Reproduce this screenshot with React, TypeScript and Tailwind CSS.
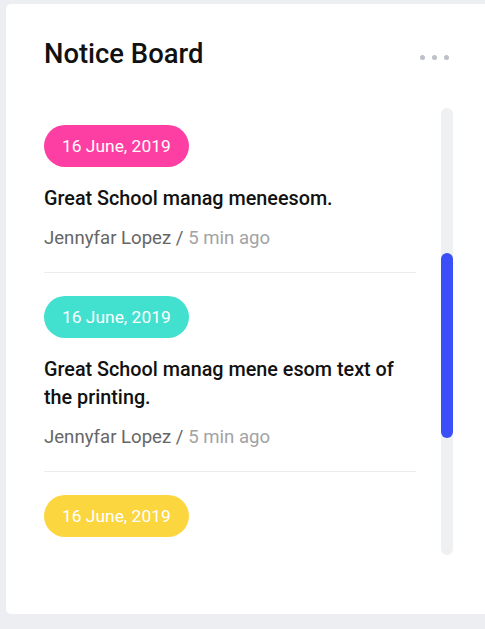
import React from "react";

interface Notice {
  date: string;
  color: string;
  title: string;
  author: string;
  time: string;
}

const notices: Notice[] = [
  {
    date: "16 June, 2019",
    color: "bg-[#fd3ea3]",
    title: "Great School manag meneesom.",
    author: "Jennyfar Lopez",
    time: "5 min ago",
  },
  {
    date: "16 June, 2019",
    color: "bg-[#42e0cf]",
    title: "Great School manag mene esom text of the printing.",
    author: "Jennyfar Lopez",
    time: "5 min ago",
  },
  {
    date: "16 June, 2019",
    color: "bg-[#fcd63f]",
    title: "Great School manag meneesom.",
    author: "Jennyfar Lopez",
    time: "5 min ago",
  },
];

const NoticeItem: React.FC<{ notice: Notice; last: boolean }> = ({ notice, last }) => {
  return (
    <div className={last ? "" : "border-b border-[#ececec] pb-[20px] mb-[23px]"}>
      <span
        className={`inline-flex h-[42px] items-center rounded-full px-[18px] text-[17.4px] text-white ${notice.color}`}
      >
        {notice.date}
      </span>
      <p className="mt-[18px] text-[19.8px] font-medium leading-[28px] text-[#111111]">
        {notice.title}
      </p>
      <p className="mt-[11px] text-[18.6px] leading-[28px] text-[#666666]">
        {notice.author} / <span className="text-[#a3a3a3]">{notice.time}</span>
      </p>
    </div>
  );
};

const App: React.FC = () => {
  return (
    <div
      className="h-[629px] w-[485px] overflow-hidden bg-[#edeef1] pl-[6px] pt-[4px]"
      style={{ fontFamily: "Roboto, 'Liberation Sans', sans-serif" }}
    >
      <div className="h-[610px] w-[520px] rounded-[5px] bg-white pl-[38px] pt-[34px]">
        <div className="flex w-[409px] items-center justify-between">
          <h2 className="text-[27.4px] font-medium leading-[32px] text-[#111111]">Notice Board</h2>
          <div className="mr-[4px] mt-[7px] flex gap-[7px]">
            <span className="h-[5px] w-[5px] rounded-full bg-[#bcc0c7]" />
            <span className="h-[5px] w-[5px] rounded-full bg-[#bcc0c7]" />
            <span className="h-[5px] w-[5px] rounded-full bg-[#bcc0c7]" />
          </div>
        </div>

        <div className="mt-[38px] flex gap-[25px]">
          <div className="h-[447px] w-[372px] overflow-hidden pt-[17px]">
            {notices.map((n, i) => (
              <NoticeItem key={i} notice={n} last={i === notices.length - 1} />
            ))}
          </div>
          <div className="flex h-[447px] w-[12px] flex-col rounded-full bg-[#eff0f2]">
            <div className="mt-[145px] h-[185px] w-[12px] rounded-full bg-[#3b4ff7]" />
          </div>
        </div>
      </div>
    </div>
  );
};

export default App;
